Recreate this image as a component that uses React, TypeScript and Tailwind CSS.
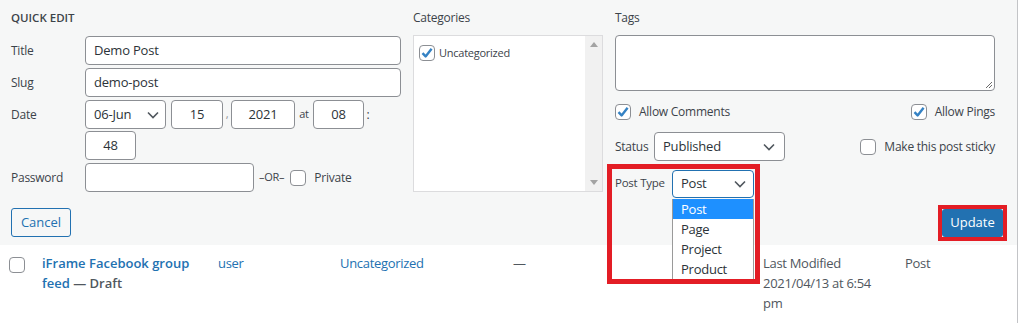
import type { ReactNode } from "react";

function Chevron() {
  return (
    <svg width="12" height="8" viewBox="0 0 12 8" className="shrink-0">
      <path d="M1 1.5 L6 6.5 L11 1.5" fill="none" stroke="#50575e" strokeWidth="1.6" />
    </svg>
  );
}

function Checkbox({ checked = false }: { checked?: boolean }) {
  return (
    <span className="w-[16px] h-[16px] shrink-0 rounded-[4px] border border-[#8c8f94] bg-white flex items-center justify-center">
      {checked && (
        <svg width="14" height="14" viewBox="0 0 14 14">
          <path d="M2.5 7.2 L5.6 10.4 L11.6 2.8" fill="none" stroke="#3582c4" strokeWidth="2.4" strokeLinejoin="round" />
        </svg>
      )}
    </span>
  );
}

function Field({ className = "", children }: { className?: string; children?: ReactNode }) {
  return (
    <div
      className={`h-[29px] bg-white border border-[#8c8f94] rounded-[4px] flex items-center text-[13px] tracking-[-0.2px] text-[#2c3338] ${className}`}
    >
      {children}
    </div>
  );
}

export default function App() {
  return (
    <div className="w-[1020px] h-[323px] bg-white overflow-hidden font-['Open_Sans',sans-serif] text-[12px] tracking-[-0.25px] text-[#3c434a]">
      <div className="w-[1018px] h-full border-r border-[#c3c4c7] relative">
        {/* quick edit panel */}
        <div className="bg-[#f6f7f7] pl-[11px] pr-[14px] pt-[8px] pb-[8px] relative z-10">
          <div className="flex gap-[12px]">
            {/* left column */}
            <div className="w-[390px]">
              <div className="h-[20px] leading-[20px] text-[11.5px] font-semibold uppercase tracking-normal">Quick Edit</div>
              <div className="mt-[8px] flex flex-col gap-[3px]">
                <div className="flex items-center">
                  <span className="w-[74px]">Title</span>
                  <Field className="flex-1 px-[8px]">Demo Post</Field>
                </div>
                <div className="flex items-center">
                  <span className="w-[74px]">Slug</span>
                  <Field className="flex-1 px-[8px]">demo-post</Field>
                </div>
                <div className="flex items-start">
                  <span className="w-[74px] h-[29px] flex items-center">Date</span>
                  <div className="flex-1 flex flex-wrap items-center gap-y-[1px]">
                    <Field className="w-[81px] pl-[8px] pr-[6px] justify-between">
                      06-Jun
                      <Chevron />
                    </Field>
                    <Field className="w-[52px] ml-[5px] justify-center">15</Field>
                    <span className="w-[8px] text-center text-[11px] text-[#8c8f94]">,</span>
                    <Field className="w-[64px] justify-center">2021</Field>
                    <span className="w-[18px] text-center text-[11px]">at</span>
                    <Field className="w-[51px] justify-center">08</Field>
                    <span className="w-[8px] text-center">:</span>
                    <div className="basis-full h-0" />
                    <Field className="w-[51px] justify-center">48</Field>
                  </div>
                </div>
                <div className="flex items-center">
                  <span className="w-[74px]">Password</span>
                  <Field className="w-[169px]" />
                  <span className="ml-[5px] text-[11px]">–OR–</span>
                  <span className="ml-[6px]">
                    <Checkbox />
                  </span>
                  <span className="ml-[8px]">Private</span>
                </div>
              </div>
            </div>

            {/* categories */}
            <div className="w-[190px]">
              <div className="h-[20px] leading-[20px]">Categories</div>
              <div className="mt-[7px] h-[157px] border border-[#dcdcde] bg-white flex">
                <div className="flex-1 pl-[5px] pt-[9px] flex items-start gap-[4px]">
                  <Checkbox checked />
                  <span className="text-[11px] leading-[16px]">Uncategorized</span>
                </div>
                <div className="w-[17px] bg-[#f1f1f1] flex flex-col items-center justify-between py-[6px]">
                  <svg width="8" height="5" viewBox="0 0 8 5">
                    <path d="M0 5 L4 0 L8 5 Z" fill="#a3a3a3" />
                  </svg>
                  <svg width="8" height="5" viewBox="0 0 8 5">
                    <path d="M0 0 L4 5 L8 0 Z" fill="#a3a3a3" />
                  </svg>
                </div>
              </div>
            </div>

            {/* tags + options */}
            <div className="w-[380px]">
              <div className="h-[20px] leading-[20px]">Tags</div>
              <div className="mt-[7px] h-[56px] border border-[#8c8f94] rounded-[4px] bg-white relative">
                <svg width="8" height="8" viewBox="0 0 8 8" className="absolute right-[1px] bottom-[1px]">
                  <path d="M1 7 L7 1 M4 7 L7 4" stroke="#6b6b6b" strokeWidth="1" />
                </svg>
              </div>
              <div className="mt-[11px] h-[20px] flex items-center justify-between">
                <div className="flex items-center gap-[8px]">
                  <Checkbox checked />
                  <span>Allow Comments</span>
                </div>
                <div className="flex items-center gap-[8px]">
                  <Checkbox checked />
                  <span>Allow Pings</span>
                </div>
              </div>
              <div className="mt-[10px] flex items-center justify-between">
                <div className="flex items-center">
                  <span className="w-[39px]">Status</span>
                  <Field className="w-[131px] pl-[8px] pr-[9px] justify-between">
                    Published
                    <Chevron />
                  </Field>
                </div>
                <div className="flex items-center gap-[8px]">
                  <Checkbox />
                  <span>Make this post sticky</span>
                </div>
              </div>
              <div className="mt-[9px] flex items-start relative">
                <span className="w-[57px] h-[26px] flex items-center text-[11.5px]">Post Type</span>
                <div className="relative">
                  <div className="w-[82px] h-[28px] bg-white border border-[#2271b1] rounded-[4px] flex items-center justify-between pl-[8px] pr-[7px] text-[13px] text-[#2c3338]">
                    Post
                    <Chevron />
                  </div>
                  <div className="absolute left-0 top-[29px] w-[82px] bg-white border-l border-r border-[#9a9a9a] text-[13px] text-[#2c3338] z-20">
                    <div className="h-[20px] leading-[20px] pl-[8px] bg-[#1e90ff] text-white">Post</div>
                    <div className="h-[20px] leading-[20px] pl-[8px]">Page</div>
                    <div className="h-[20px] leading-[20px] pl-[8px]">Project</div>
                    <div className="h-[20px] leading-[20px] pl-[8px]">Product</div>
                  </div>
                </div>
                <div className="absolute -left-[8px] -top-[6px] w-[153px] h-[120px] border-[5px] border-[#e31d25] pointer-events-none z-30" />
              </div>
            </div>
          </div>

          <div className="mt-[10px] flex items-center justify-between tracking-normal">
            <button className="h-[29px] w-[60px] border border-[#2271b1] rounded-[3px] text-[13px] text-[#2271b1] bg-[#f6f7f7]">
              Cancel
            </button>
            <div className="relative">
              <button className="h-[28px] w-[61px] rounded-[3px] bg-[#2271b1] text-[13px] text-white">Update</button>
              <div className="absolute -inset-[4px] border-[4px] border-[#e31d25] pointer-events-none" />
            </div>
          </div>
        </div>

        {/* post row */}
        <div className="flex text-[13px] tracking-[-0.3px] leading-[20px] pt-[8px]">
          <div className="w-[42px] pl-[9px] pt-[4px]">
            <Checkbox />
          </div>
          <div className="w-[176px] font-semibold tracking-normal">
            <div className="text-[#2271b1]">iFrame Facebook group</div>
            <div>
              <span className="text-[#2271b1]">feed</span>
              <span className="text-[#50575e]"> — Draft</span>
            </div>
          </div>
          <div className="w-[122px] text-[#2271b1]">user</div>
          <div className="w-[173px] text-[#2271b1]">Uncategorized</div>
          <div className="w-[250px] text-[#50575e]">—</div>
          <div className="w-[142px] text-[#50575e]">
            <div>Last Modified</div>
            <div>2021/04/13 at 6:54</div>
            <div>pm</div>
          </div>
          <div className="text-[#50575e]">Post</div>
        </div>
      </div>
    </div>
  );
}
